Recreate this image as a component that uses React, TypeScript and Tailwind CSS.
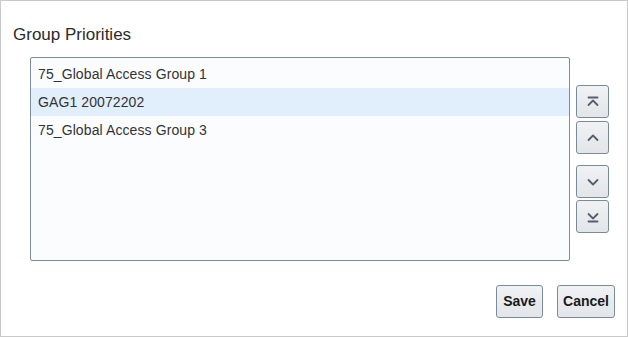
import { useState } from 'react'

const GROUPS = ['75_Global Access Group 1', 'GAG1 20072202', '75_Global Access Group 3']

function ArrowIcon({ kind }: { kind: 'top' | 'up' | 'down' | 'bottom' }) {
  return (
    <svg width="14" height="14" viewBox="0 0 14 14" fill="none" stroke="#55606b" strokeWidth="1.8" strokeLinecap="round" strokeLinejoin="round">
      {kind === 'top' && (
        <>
          <path d="M2.5 2.5h9" />
          <path d="M2.5 10l4.5-4.5 4.5 4.5" />
        </>
      )}
      {kind === 'up' && <path d="M2.5 9l4.5-4.5 4.5 4.5" />}
      {kind === 'down' && <path d="M2.5 5l4.5 4.5 4.5-4.5" />}
      {kind === 'bottom' && (
        <>
          <path d="M2.5 4l4.5 4.5 4.5-4.5" />
          <path d="M2.5 11.5h9" />
        </>
      )}
    </svg>
  )
}

export default function App() {
  const [selected, setSelected] = useState(1)

  return (
    <div className="w-[628px] h-[337px] bg-white border border-[#c9c9c9] flex flex-col font-['Liberation_Sans',Arial,sans-serif] text-[#333]">
      {/* Title */}
      <h1 className="text-[17px] leading-none pl-3 pt-[25px] text-[#2b2b2b]">Group Priorities</h1>

      {/* List + move buttons */}
      <div className="flex pl-[29px] pt-[14px]">
        <div className="w-[540px] h-[204px] rounded-[2px] border border-[#7c8f99] bg-[#fbfcfe] pt-[2px]">
          {GROUPS.map((g, i) => (
            <div
              key={g}
              onClick={() => setSelected(i)}
              className={`h-[28px] flex items-center pl-[7px] text-[14px] tracking-[0.1px] text-[#333] ${i === selected ? 'bg-[#e1eefb]' : ''}`}
            >
              {g}
            </div>
          ))}
        </div>

        <div className="flex flex-col pl-[6px] pt-[28px]">
          {(['top', 'up'] as const).map((k) => (
            <button key={k} className="w-[33px] h-[33px] mb-[3px] flex items-center justify-center rounded-[3px] border border-[#7b8a98] bg-gradient-to-b from-[#f0f2f4] to-[#e2e5e9]">
              <ArrowIcon kind={k} />
            </button>
          ))}
          <div className="h-[8px]" />
          {(['down', 'bottom'] as const).map((k) => (
            <button key={k} className="w-[33px] h-[33px] mb-[2px] flex items-center justify-center rounded-[3px] border border-[#7b8a98] bg-gradient-to-b from-[#f0f2f4] to-[#e2e5e9]">
              <ArrowIcon kind={k} />
            </button>
          ))}
        </div>
      </div>

      {/* Footer */}
      <div className="flex justify-end gap-[14px] pr-[12px] pt-[24px]">
        <button className="w-[47px] h-[33px] rounded-[3px] border border-[#7b8a98] bg-gradient-to-b from-[#f0f2f4] to-[#e2e5e9] text-[14px] font-bold text-[#1a1a1a]">
          Save
        </button>
        <button className="w-[58px] h-[33px] rounded-[3px] border border-[#7b8a98] bg-gradient-to-b from-[#f0f2f4] to-[#e2e5e9] text-[14px] font-bold text-[#1a1a1a]">
          Cancel
        </button>
      </div>
    </div>
  )
}
